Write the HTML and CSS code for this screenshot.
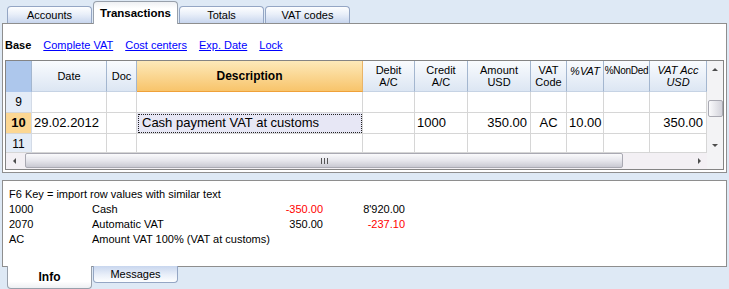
FILE: index.html
```html
<!DOCTYPE html>
<html lang="en">
<head>
  <meta charset="UTF-8">
  <title>Transactions</title>
  <link rel="stylesheet" href="styles.css">
</head>
<body>

<!-- Top tabs -->
<div class="tabs">
  <div class="tab">Accounts</div>
  <div class="tab active">Transactions</div>
  <div class="tab">Totals</div>
  <div class="tab">VAT codes</div>
</div>

<div class="panel main-panel">
  <div class="views">
    <b>Base</b>
    <a href="#">Complete VAT</a>
    <a href="#">Cost centers</a>
    <a href="#">Exp. Date</a>
    <a href="#">Lock</a>
  </div>

  <div class="grid">
    <!-- header -->
    <div class="hd corner"></div>
    <div class="hd">Date</div>
    <div class="hd">Doc</div>
    <div class="hd sel">Description</div>
    <div class="hd">Debit<br>A/C</div>
    <div class="hd">Credit<br>A/C</div>
    <div class="hd">Amount<br>USD</div>
    <div class="hd">VAT<br>Code</div>
    <div class="hd it up">%VAT</div>
    <div class="hd up tight">%NonDed</div>
    <div class="hd it">VAT Acc<br>USD</div>

    <div class="vscroll">
      <div class="arrow"><i class="tri-up"></i></div>
      <div class="vtrack"><div class="vthumb"></div></div>
      <div class="arrow"><i class="tri-down"></i></div>
    </div>

    <!-- row 9 -->
    <div class="c num">9</div>
    <div class="c"></div><div class="c"></div><div class="c"></div>
    <div class="c"></div><div class="c"></div><div class="c"></div>
    <div class="c"></div><div class="c"></div><div class="c"></div><div class="c"></div>

    <!-- row 10 -->
    <div class="c num cur">10</div>
    <div class="c">29.02.2012</div>
    <div class="c"></div>
    <div class="c focus">Cash payment VAT at customs</div>
    <div class="c"></div>
    <div class="c">1000</div>
    <div class="c r">350.00</div>
    <div class="c mid">AC</div>
    <div class="c r">10.00</div>
    <div class="c"></div>
    <div class="c r">350.00</div>

    <!-- row 11 -->
    <div class="c num">11</div>
    <div class="c"></div><div class="c"></div><div class="c"></div>
    <div class="c"></div><div class="c"></div><div class="c"></div>
    <div class="c"></div><div class="c"></div><div class="c"></div><div class="c"></div>

    <div class="hscroll">
      <div class="arrow"><i class="tri-left"></i></div>
      <div class="htrack"><div class="hthumb"><i class="grip"></i></div></div>
      <div class="arrow"><i class="tri-right"></i></div>
    </div>
    <div class="sb-corner"></div>
  </div>
</div>

<!-- Info panel -->
<div class="panel info-panel">
  <div class="info">
    <div class="wide">F6 Key = import row values with similar text</div>
    <div>1000</div><div>Cash</div><div class="r red">-350.00</div><div class="r">8'920.00</div>
    <div>2070</div><div>Automatic VAT</div><div class="r">350.00</div><div class="r red">-237.10</div>
    <div>AC</div><div class="span3">Amount VAT 100% (VAT at customs)</div>
  </div>
</div>

<div class="btabs">
  <div class="btab active">Info</div>
  <div class="btab">Messages</div>
</div>

</body>
</html>
```

FILE: styles.css
```css
* {
  box-sizing: border-box;
}
body {
  margin: 0;
  width: 729px;
  height: 289px;
  overflow: hidden;
  background: #dee9f5;
  font-family: "Liberation Sans", Arial, sans-serif;
  font-size: 11px;
  color: #000;
}

/* tabs */
.tabs {
  display: flex;
  align-items: flex-end;
  height: 23px;
  padding-left: 7px;
}
.tab {
  width: 85px;
  height: 17px;
  margin-right: 1px;
  border: 1px solid #94a6c4;
  border-bottom: none;
  border-radius: 4px 4px 0 0;
  background: linear-gradient(#fdfeff, #e9eff9 45%, #c8d6ee);
  display: flex;
  align-items: center;
  justify-content: center;
}
.tab.active {
  height: 23px;
  margin-bottom: -1px;
  position: relative;
  z-index: 1;
  border-color: #98a0ab;
  background: linear-gradient(#eef0f3, #fff 30%);
  font-weight: bold;
  font-size: 11.5px;
}

.panel {
  margin-left: 2px;
  width: 725px;
  border: 1px solid #8e8e8e;
  background: #fff;
}
.main-panel {
  height: 150px;
}

/* view links */
.views {
  height: 36px;
  padding: 14px 0 0 2px;
  display: flex;
  gap: 12px;
  line-height: 14px;
}
.views a {
  color: #0000ff;
  text-decoration: underline;
}

/* table */
.grid {
  margin: 0 2px;
  border: 1px solid #848484;
  display: grid;
  grid-template-columns: 26px 75px 30px 226px 52px 53px 63px 36px 37px 46px 57px 16px;
  grid-template-rows: 31px 21px 21px 19px 16px;
}
.hd {
  background: linear-gradient(#f9fbfe, #dce6f3);
  border-right: 1px solid #a3b6cf;
  border-bottom: 1px solid #c6d3e4;
  display: flex;
  align-items: center;
  justify-content: center;
  text-align: center;
  line-height: 12px;
  overflow: hidden;
  white-space: nowrap;
}
.hd.corner {
  background: #adc7ec;
  border-bottom-color: #adc7ec;
}
.hd.sel {
  background: linear-gradient(#fde9b9, #f8c46b);
  border-bottom: 1px solid #efa13a;
  border-right-color: #e9b468;
  font-weight: bold;
  font-size: 12px;
}
.hd.it {
  font-style: italic;
}
.hd.up {
  padding-bottom: 10px;
}
.hd.tight {
  font-size: 10px;
  letter-spacing: -0.3px;
}
.c {
  border-right: 1px solid #d6d6d6;
  border-bottom: 1px solid #d6d6d6;
  font-size: 13px;
  line-height: 20px;
  padding: 0 2px;
  white-space: nowrap;
  overflow: hidden;
}
.c.num {
  background: #e4ecf7;
  border-right-color: #d3dbe7;
  text-align: center;
  font-size: 12px;
}
.c.cur {
  background: #fcd793;
  font-weight: bold;
  font-size: 13px;
}
.c.focus {
  background: #e7e7f5;
  outline: 1px dotted #222;
  outline-offset: -2px;
  padding-left: 5px;
}
.c.r {
  text-align: right;
  padding-right: 3px;
}
.c.mid {
  text-align: center;
}

/* scrollbars */
.vscroll {
  grid-column: 12;
  grid-row: 1 / span 4;
  background: #f3f3f5;
  display: flex;
  flex-direction: column;
}
.arrow {
  width: 16px;
  height: 16px;
  display: flex;
  align-items: center;
  justify-content: center;
  flex: none;
}
.vtrack {
  flex: 1;
}
.vthumb {
  margin: 23px 0 0 1px;
  width: 15px;
  height: 17px;
  border: 1px solid #a9a9b2;
  border-radius: 2px;
  background: linear-gradient(to right, #fafafc, #d3d3db);
}
.hscroll {
  grid-column: 1 / span 11;
  grid-row: 5;
  background: #f3f0f4;
  display: flex;
}
.htrack {
  flex: 1;
}
.hthumb {
  margin: 0 0 0 3px;
  width: 598px;
  height: 15px;
  border: 1px solid #a9a9b2;
  border-radius: 2px;
  background: linear-gradient(#fafafc, #e6e6ec 50%, #c9c9d2);
  display: flex;
  align-items: center;
  justify-content: center;
}
.grip {
  width: 7px;
  height: 6px;
  background: repeating-linear-gradient(to right, #555 0 1px, transparent 1px 3px);
}
.sb-corner {
  grid-column: 12;
  grid-row: 5;
  background: #f3f3f5;
}
.tri-up, .tri-down, .tri-left, .tri-right {
  width: 0;
  height: 0;
}
.tri-up {
  border-left: 3px solid transparent;
  border-right: 3px solid transparent;
  border-bottom: 3px solid #4d4d4d;
}
.tri-down {
  border-left: 3px solid transparent;
  border-right: 3px solid transparent;
  border-top: 3px solid #4d4d4d;
}
.tri-left {
  border-top: 3px solid transparent;
  border-bottom: 3px solid transparent;
  border-right: 3px solid #4d4d4d;
}
.tri-right {
  border-top: 3px solid transparent;
  border-bottom: 3px solid transparent;
  border-left: 3px solid #4d4d4d;
}

/* info panel */
.info-panel {
  margin-top: 7px;
  height: 87px;
  padding: 6px 0 0 6px;
}
.info {
  display: grid;
  grid-template-columns: 83px 151px 80px 82px;
  line-height: 15px;
}
.info .wide {
  grid-column: 1 / span 4;
}
.info .span3 {
  grid-column: 2 / span 3;
}
.info .r {
  text-align: right;
}
.info .red {
  color: #ff0000;
}

.btabs {
  display: flex;
  align-items: flex-start;
  padding-left: 7px;
  margin-top: -1px;
}
.btab {
  width: 85px;
  height: 17px;
  margin-right: 1px;
  border: 1px solid #94a6c4;
  border-top: none;
  border-radius: 0 0 4px 4px;
  background: linear-gradient(#c8d6ee, #e9eff9 55%, #fdfeff);
  display: flex;
  align-items: center;
  justify-content: center;
}
.btab.active {
  height: 23px;
  position: relative;
  z-index: 1;
  border-color: #98a0ab;
  background: linear-gradient(#fff 70%, #eef0f3);
  font-weight: bold;
  font-size: 12px;
}
```
